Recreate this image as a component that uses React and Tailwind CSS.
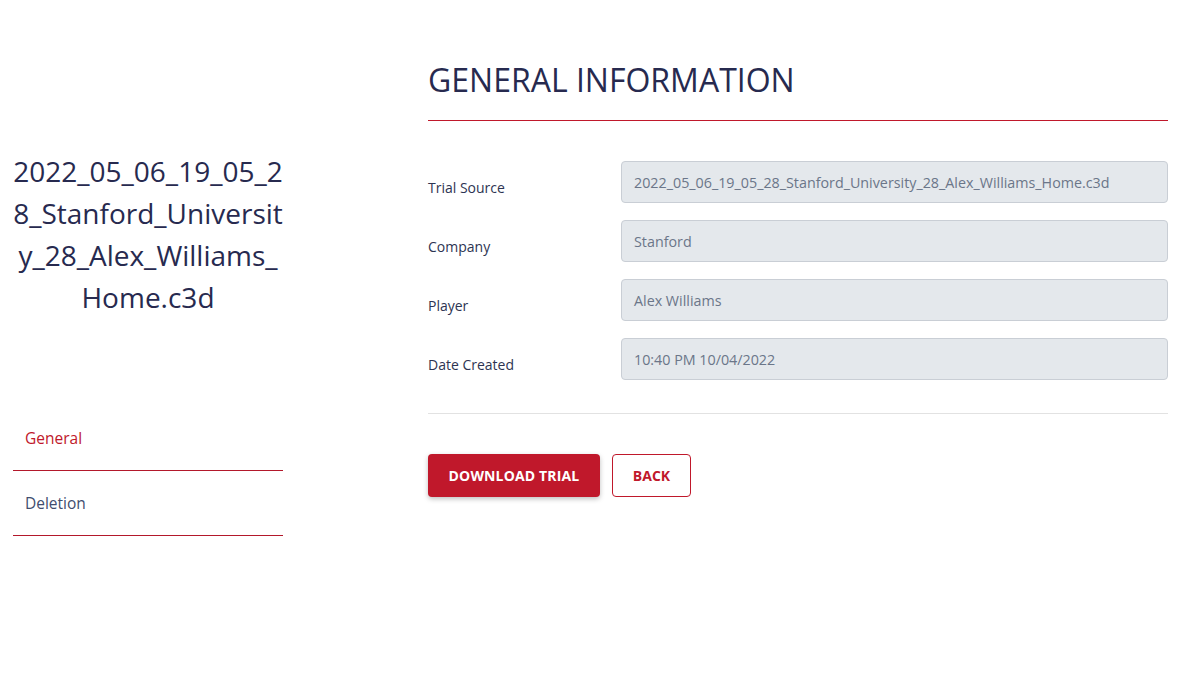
import React from 'react';

const fields = [
  { label: 'Trial Source', value: '2022_05_06_19_05_28_Stanford_University_28_Alex_Williams_Home.c3d' },
  { label: 'Company', value: 'Stanford' },
  { label: 'Player', value: 'Alex Williams' },
  { label: 'Date Created', value: '10:40 PM 10/04/2022' },
];

const nav = [
  { name: 'General', active: true },
  { name: 'Deletion', active: false },
];

export default function App() {
  return (
    <div
      className="flex min-h-[686px] bg-white pl-[13px] pr-[25px]"
      style={{ fontFamily: '"Open Sans", "Noto Sans", sans-serif' }}
    >
      <aside className="w-[270px] shrink-0 pt-[150px]">
        <h1 className="text-center text-[28px] leading-[42px] text-[#272a4f] break-all">
          2022_05_06_19_05_28_Stanford_University_28_Alex_Williams_Home.c3d
        </h1>
        <nav className="mt-[88px]">
          {nav.map((item) => (
            <div
              key={item.name}
              className={`border-b border-[#b3182b] px-3 pt-[21px] pb-[21px] text-[15.5px] leading-[22px] ${
                item.active ? 'text-[#c0182b]' : 'text-[#414d6e]'
              }`}
            >
              {item.name}
            </div>
          ))}
        </nav>
      </aside>

      <main className="ml-[145px] flex-1 pt-[60px]">
        <h2 className="border-b border-[#c0182b] pb-5 text-[32px] leading-[40px] text-[#272a4f]">
          GENERAL INFORMATION
        </h2>

        <div className="mt-10 flex flex-col gap-[17px]">
          {fields.map((f) => (
            <div key={f.label} className="flex items-start">
              <label className="w-[193px] shrink-0 pt-[17px] text-sm leading-5 text-[#2d3452]">
                {f.label}
              </label>
              <div className="flex h-[42px] flex-1 items-center rounded border border-[#c9ced5] bg-[#e4e8ec] px-3 pt-px text-[14.3px] text-[#6b7689]">
                {f.value}
              </div>
            </div>
          ))}
        </div>

        <div className="mt-[33px] border-t border-[#e2e2e2]" />

        <div className="mt-10 flex gap-3">
          <button className="h-[43px] w-[172px] rounded bg-[#c0182b] pt-px text-sm font-bold tracking-[0.15px] text-white shadow-[0_2px_5px_rgba(0,0,0,0.25)]">
            DOWNLOAD TRIAL
          </button>
          <button className="h-[43px] w-[79px] rounded border border-[#c0182b] bg-white pt-px text-sm font-bold text-[#c0182b]">
            BACK
          </button>
        </div>
      </main>
    </div>
  );
}
